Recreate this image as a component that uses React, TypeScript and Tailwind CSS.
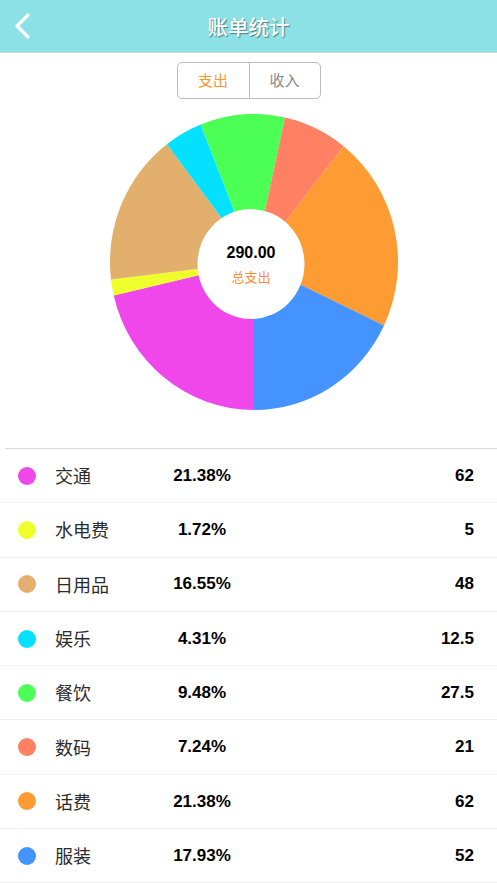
import type { JSX } from "react"

const items = [
  { name: "交通", pct: "21.38%", value: "62", amount: 62, color: "#f047eb" },
  { name: "水电费", pct: "1.72%", value: "5", amount: 5, color: "#efff2b" },
  { name: "日用品", pct: "16.55%", value: "48", amount: 48, color: "#e2b06c" },
  { name: "娱乐", pct: "4.31%", value: "12.5", amount: 12.5, color: "#04e1ff" },
  { name: "餐饮", pct: "9.48%", value: "27.5", amount: 27.5, color: "#4cff55" },
  { name: "数码", pct: "7.24%", value: "21", amount: 21, color: "#ff8063" },
  { name: "话费", pct: "21.38%", value: "62", amount: 62, color: "#ff9b33" },
  { name: "服装", pct: "17.93%", value: "52", amount: 52, color: "#4493ff" },
]

const cjk = { fontFamily: '"Noto Sans CJK SC", "Noto Sans", sans-serif' }
const num = { fontFamily: '"Liberation Sans", Arial, sans-serif' }

function Donut(): JSX.Element {
  const total = items.reduce((s, i) => s + i.amount, 0)
  const c = 144
  const r = 144
  let start = 180
  const point = (deg: number) => {
    const rad = (deg * Math.PI) / 180
    return `${c + r * Math.sin(rad)} ${c - r * Math.cos(rad)}`
  }

  return (
    <div className="relative h-[296px] w-[288px]">
      <svg width="288" height="296" viewBox="0 0 288 288" preserveAspectRatio="none">
        {items.map((item) => {
          const sweep = (item.amount / total) * 360
          const end = start + sweep
          const d = `M ${c} ${c} L ${point(start)} A ${r} ${r} 0 ${sweep > 180 ? 1 : 0} 1 ${point(end)} Z`
          start = end
          return <path key={item.name} d={d} fill={item.color} />
        })}
        <circle cx={c - 3} cy={c + 2} r="53.5" fill="#ffffff" />
      </svg>
      <div className="absolute left-[87px] top-[131px] flex w-[108px] flex-col items-center">
        <span className="text-[16px] font-bold leading-none text-black" style={num}>
          290.00
        </span>
        <span className="mt-[9px] text-[13px] leading-none text-[#ff8c38]" style={cjk}>
          总支出
        </span>
      </div>
    </div>
  )
}

export default function App(): JSX.Element {
  return (
    <div className="h-[883px] w-[497px] overflow-hidden bg-white">
      {/* Header */}
      <header className="relative flex h-[53px] items-center justify-center border-b border-[#c8d4d6] bg-[#8be1e5]">
        <svg className="absolute left-[13px] top-[13px]" width="18" height="26" viewBox="0 0 18 26">
          <path d="M15 2 L4 13 L15 24" fill="none" stroke="#ffffff" strokeWidth="3.2" strokeLinecap="round" strokeLinejoin="round" />
        </svg>
        <h1
          className="text-[20.5px] font-medium text-white [text-shadow:1px_1px_1px_rgba(0,0,0,0.45)]"
          style={cjk}
        >
          账单统计
        </h1>
      </header>

      {/* Segment */}
      <div className="flex justify-center pt-[9px]">
        <div className="flex h-[37px] w-[144px] overflow-hidden rounded-[5px] border border-[#bdbdbd]" style={cjk}>
          <div className="flex w-[72px] items-center justify-center border-r border-[#bdbdbd] text-[15px] text-[#f7972f]">
            支出
          </div>
          <div className="flex flex-1 items-center justify-center text-[15px] text-[#8a8a8a]">收入</div>
        </div>
      </div>

      {/* Chart */}
      <div className="flex justify-center pl-[11px] pt-[15px]">
        <Donut />
      </div>

      {/* List */}
      <div className="ml-[5px] mt-[38px] border-t border-[#d9d9d9]" />
      <ul>
        {items.map((item) => (
          <li key={item.name} className="flex h-[54.3px] items-center border-b border-[#efefef]">
            <span className="ml-[18px] h-[18px] w-[18px] rounded-full" style={{ backgroundColor: item.color }} />
            <span className="ml-[19px] w-[87px] text-[18px] text-[#2b2b2b]" style={cjk}>
              {item.name}
            </span>
            <span className="w-[120px] text-center text-[17px] font-bold text-black" style={num}>
              {item.pct}
            </span>
            <span className="flex-1 pr-[23px] text-right text-[17px] font-bold text-black" style={num}>
              {item.value}
            </span>
          </li>
        ))}
      </ul>
    </div>
  )
}
